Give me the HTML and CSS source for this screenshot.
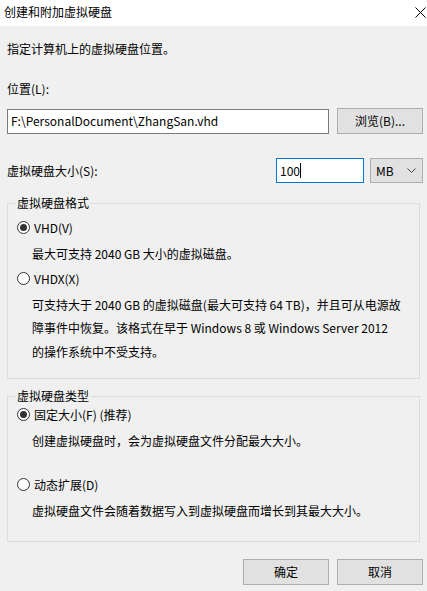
FILE: index.html
```html
<!DOCTYPE html>
<html>
<head>
  <meta charset="utf-8">
  <title>创建和附加虚拟硬盘</title>
  <link rel="stylesheet" href="styles.css">
</head>
<body>
  <div class="titlebar">
    <span class="title">创建和附加虚拟硬盘</span>
    <svg class="close" width="11" height="11" viewBox="0 0 11 11"><path d="M0.5 0.5 L10.5 10.5 M10.5 0.5 L0.5 10.5" stroke="#000" stroke-width="1" fill="none"/></svg>
  </div>

  <div class="content">
    <div class="intro">指定计算机上的虚拟硬盘位置。</div>

    <div class="label">位置(L):</div>
    <div class="row path-row">
      <div class="textbox path">F:\PersonalDocument\ZhangSan.vhd</div>
      <div class="button browse">浏览(B)...</div>
    </div>

    <div class="row size-row">
      <div class="label size-label">虚拟硬盘大小(S):</div>
      <div class="textbox size focused">100<span class="caret"></span></div>
      <div class="combo">
        <span>MB</span>
        <svg width="9" height="5" viewBox="0 0 9 5"><path d="M0.5 0.5 L4.5 4.5 L8.5 0.5" stroke="#444" fill="none"/></svg>
      </div>
    </div>

    <fieldset class="group format">
      <legend>虚拟硬盘格式</legend>
      <div class="radio checked">VHD(V)</div>
      <div class="desc">最大可支持 2040 GB 大小的虚拟磁盘。</div>
      <div class="radio">VHDX(X)</div>
      <div class="desc">可支持大于 2040 GB 的虚拟磁盘(最大可支持 64 TB)，并且可从电源故<br>障事件中恢复。该格式在早于 Windows 8 或 Windows Server 2012<br>的操作系统中不受支持。</div>
    </fieldset>

    <fieldset class="group type">
      <legend>虚拟硬盘类型</legend>
      <div class="radio checked">固定大小(F) (推荐)</div>
      <div class="desc">创建虚拟硬盘时，会为虚拟硬盘文件分配最大大小。</div>
      <div class="radio spaced">动态扩展(D)</div>
      <div class="desc">虚拟硬盘文件会随着数据写入到虚拟硬盘而增长到其最大大小。</div>
    </fieldset>

    <div class="row buttons">
      <div class="button">确定</div>
      <div class="button">取消</div>
    </div>
  </div>
</body>
</html>
```

FILE: styles.css
```css
body {
  margin: 0;
  width: 427px;
  height: 591px;
  background: #f0f0f0;
  font-family: "Noto Sans CJK SC", "Noto Sans", sans-serif;
  font-size: 12px;
  line-height: 16px;
  color: #000;
  overflow: hidden;
}

.titlebar {
  height: 26px;
  background: #fff;
  display: flex;
  align-items: center;
  justify-content: space-between;
  padding: 0 1px 2px 4px;
  box-sizing: border-box;
}
.titlebar .close {
  margin-top: 1px;
}

.content {
  padding: 15px 4px 0 7px;
}

.row {
  display: flex;
  align-items: center;
}

.intro {
  margin-bottom: 24px;
}

.label {
  margin-bottom: 11px;
}

.textbox {
  background: #fff;
  border: 1px solid #7a7a7a;
  height: 25px;
  box-sizing: border-box;
  padding: 0 3px;
  display: flex;
  align-items: center;
}
.textbox.focused {
  border-color: #0078d7;
}
.path {
  width: 322px;
}
.caret {
  display: inline-block;
  width: 1px;
  height: 15px;
  background: #000;
}

.button {
  background: #e1e1e1;
  border: 1px solid #adadad;
  box-sizing: border-box;
  width: 86px;
  height: 26px;
  display: flex;
  align-items: center;
  justify-content: center;
}
.browse {
  margin-left: 8px;
}

.size-row {
  margin-top: 24px;
}
.size-label {
  flex: 1;
  margin-bottom: 0;
}
.size {
  width: 88px;
}
.combo {
  margin-left: 6px;
  width: 53px;
  height: 25px;
  box-sizing: border-box;
  background: #e1e1e1;
  border: 1px solid #adadad;
  display: flex;
  align-items: center;
  justify-content: space-between;
  padding: 0 6px 0 5px;
}

.group {
  margin: 0 3px 0 0;
  border: 1px solid #dcdcdc;
  padding: 8px 0 0 9px;
  box-sizing: border-box;
}
.group legend {
  padding: 0 1px;
  margin-left: -1px;
}
.format {
  margin-top: 12px;
  height: 184px;
  padding-top: 9px;
}
.type {
  margin-top: 9px;
  height: 154px;
  padding-top: 3px;
}

.radio {
  position: relative;
  padding-left: 17px;
  margin-bottom: 6px;
}
.radio::before {
  content: "";
  position: absolute;
  left: 0;
  top: 1px;
  width: 13px;
  height: 13px;
  box-sizing: border-box;
  border: 1px solid #333;
  border-radius: 50%;
  background: #fff;
}
.radio.checked::after {
  content: "";
  position: absolute;
  left: 3px;
  top: 4px;
  width: 7px;
  height: 7px;
  border-radius: 50%;
  background: #333;
}
.radio.spaced {
  margin-top: 24px;
}

.desc {
  padding-left: 15px;
  line-height: 23.5px;
  margin-bottom: 5px;
  white-space: nowrap;
}

.buttons {
  justify-content: flex-end;
  gap: 8px;
  margin-top: 17px;
}
```
